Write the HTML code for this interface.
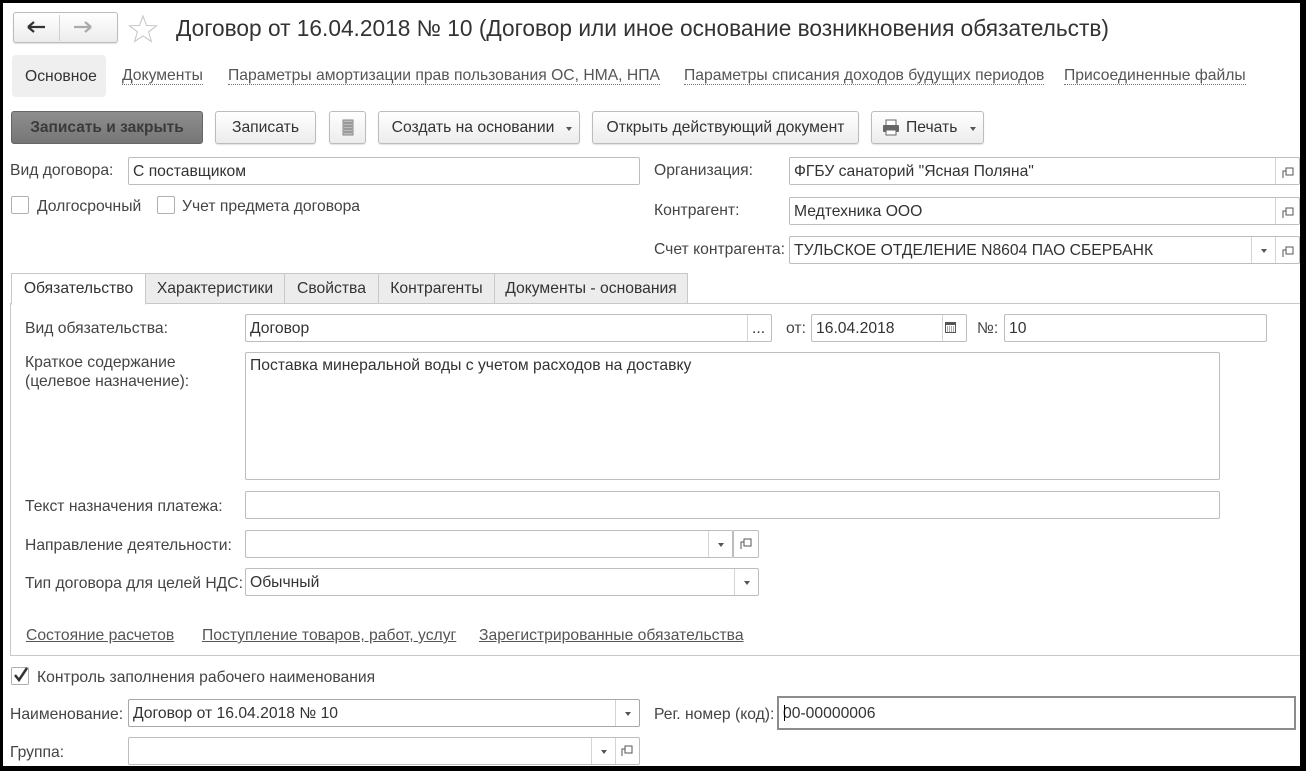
<!DOCTYPE html>
<html><head><meta charset="utf-8"><style>
*{box-sizing:border-box;margin:0;padding:0}
body{width:1306px;height:771px;background:#000;position:relative;overflow:hidden;font-family:"Liberation Sans",Arial,sans-serif;font-size:15.7px;color:#444}
#pg{position:absolute;left:3px;top:3px;width:1297px;height:763px;background:#fff}
.a{position:absolute;white-space:nowrap}
.t{position:absolute;white-space:nowrap;line-height:18px}
.inp{position:absolute;border:1px solid #bdbdbd;border-radius:2px;background:#fff;color:#333;padding-left:4px;white-space:nowrap}
.btn{position:absolute;border:1px solid #bcbcbc;border-radius:3px;background:linear-gradient(#fff,#ececec);color:#333;text-align:center;box-shadow:0 1px 1px rgba(0,0,0,.12)}
.dd,.dn{position:absolute;top:0;bottom:0;width:24px;border-left:1px solid #d4d4d4}
.dd:after{content:"";position:absolute;left:9px;top:50%;margin-top:-1px;border-left:3px solid transparent;border-right:3px solid transparent;border-top:4px solid #555}
.lk{position:absolute;white-space:nowrap;color:#555;border-bottom:1px dotted #777;line-height:17px}
.ul{position:absolute;white-space:nowrap;color:#555;text-decoration:underline;line-height:18px}
.cb{position:absolute;width:18px;height:18px;border:1px solid #b0b0b0;border-radius:2px;background:#fff}
.tab{position:absolute;top:270px;height:31px;border:1px solid #c8c8c8;background:#ececec;text-align:center;line-height:30px;color:#333}
svg{position:absolute}
</style></head><body><div id="pg">
<div class="btn" style="left:10px;top:9px;width:105px;height:31px"></div>
<div class="a" style="left:56px;top:12px;width:1px;height:26px;background:#d0d0d0"></div>
<svg style="left:24px;top:17px" width="20" height="14"><path d="M1 7H18M1 7L7 2M1 7L7 12" stroke="#333" stroke-width="2.2" fill="none"/></svg>
<svg style="left:70px;top:17px" width="20" height="14"><path d="M1 7H18M18 7L12 2M18 7L12 12" stroke="#aaa" stroke-width="2.2" fill="none"/></svg>
<svg style="left:124px;top:11px" width="32" height="30"><path d="M16 2L19.5 11.5 29.5 11.8 21.6 17.8 24.4 27.5 16 21.8 7.6 27.5 10.4 17.8 2.5 11.8 12.5 11.5Z" fill="none" stroke="#c4c4c4" stroke-width="1"/></svg>
<div class="t" style="left:173px;top:12px;font-size:22.7px;line-height:26px;color:#333">Договор от 16.04.2018 № 10 (Договор или иное основание возникновения обязательств)</div>
<div class="a" style="left:9px;top:52px;width:94px;height:42px;background:#efefef;border-radius:4px"></div>
<div class="t" style="left:22px;top:65px;color:#333">Основное</div>
<div class="lk" style="left:119px;top:64px">Документы</div>
<div class="lk" style="left:225px;top:64px">Параметры амортизации прав пользования ОС, НМА, НПА</div>
<div class="lk" style="left:681px;top:64px">Параметры списания доходов будущих периодов</div>
<div class="lk" style="left:1061px;top:64px">Присоединенные файлы</div>
<div class="a" style="left:8px;top:108px;width:192px;height:33px;border:1px solid #666;border-radius:3px;background:linear-gradient(#8e8e8e,#767676);color:#3a3a3a;font-weight:bold;text-align:center;line-height:32px;font-size:15.5px">Записать и закрыть</div>
<div class="btn" style="left:212px;top:108px;width:101px;height:33px;line-height:32px">Записать</div>
<div class="btn" style="left:326px;top:108px;width:37px;height:33px"></div>
<svg style="left:339px;top:116px" width="12" height="17"><rect x="1" y="1" width="10" height="15" fill="#bbb" stroke="#888"/><path d="M2 4H10M2 7H10M2 10H10M2 13H10" stroke="#777"/></svg>
<div class="btn" style="left:375px;top:108px;width:202px;height:33px;line-height:32px;padding-right:12px">Создать на основании</div>
<div class="a" style="left:563px;top:124px;border-left:3px solid transparent;border-right:3px solid transparent;border-top:4px solid #555"></div>
<div class="btn" style="left:589px;top:108px;width:267px;height:33px;line-height:32px">Открыть действующий документ</div>
<div class="btn" style="left:868px;top:108px;width:113px;height:33px;line-height:32px;text-align:left"><span style="margin-left:34px">Печать</span></div>
<svg style="left:879px;top:116px" width="18" height="17"><rect x="4" y="1" width="10" height="6" fill="#fff" stroke="#666"/><rect x="1" y="6" width="16" height="7" rx="1" fill="#666"/><rect x="4" y="11" width="10" height="5" fill="#fff" stroke="#666"/></svg>
<div class="a" style="left:967px;top:124px;border-left:3px solid transparent;border-right:3px solid transparent;border-top:4px solid #555"></div>
<div class="t" style="left:7px;top:159px">Вид договора:</div>
<div class="inp" style="left:125px;top:154px;width:512px;height:28px;line-height:27px">С поставщиком</div>
<div class="cb" style="left:8px;top:193px"></div><div class="t" style="left:34px;top:195px">Долгосрочный</div>
<div class="cb" style="left:154px;top:193px"></div><div class="t" style="left:179px;top:195px">Учет предмета договора</div>
<div class="t" style="left:651px;top:159px">Организация:</div>
<div class="inp" style="left:786px;top:154px;width:511px;height:28px;line-height:27px">ФГБУ санаторий "Ясная Поляна"<div class="dn" style="right:0"></div></div>
<div class="t" style="left:651px;top:199px">Контрагент:</div>
<div class="inp" style="left:786px;top:194px;width:511px;height:28px;line-height:27px">Медтехника ООО<div class="dn" style="right:0"></div></div>
<div class="t" style="left:651px;top:238px">Счет контрагента:</div>
<div class="inp" style="left:786px;top:233px;width:511px;height:28px;line-height:27px">ТУЛЬСКОЕ ОТДЕЛЕНИЕ N8604 ПАО СБЕРБАНК<div class="dd" style="right:24px"></div><div class="dn" style="right:0"></div></div>
<svg style="left:1279px;top:164px" width="12" height="12"><path d="M1 11V4H4M4 8V1H11V8H4Z" fill="none" stroke="#555"/></svg>
<svg style="left:1279px;top:204px" width="12" height="12"><path d="M1 11V4H4M4 8V1H11V8H4Z" fill="none" stroke="#555"/></svg>
<svg style="left:1279px;top:243px" width="12" height="12"><path d="M1 11V4H4M4 8V1H11V8H4Z" fill="none" stroke="#555"/></svg>
<div class="a" style="left:7px;top:300px;width:1290px;height:353px;border:1px solid #c8c8c8;border-right:none"></div>
<div class="tab" style="left:142px;width:140px">Характеристики</div>
<div class="tab" style="left:281px;width:95px">Свойства</div>
<div class="tab" style="left:375px;width:117px">Контрагенты</div>
<div class="tab" style="left:491px;width:194px">Документы - основания</div>
<div class="tab" style="left:8px;width:135px;background:#fff;border-bottom-color:#fff;height:32px">Обязательство</div>
<div class="t" style="left:22px;top:317px">Вид обязательства:</div>
<div class="inp" style="left:242px;top:311px;width:527px;height:28px;line-height:27px">Договор<div class="dn" style="right:0"></div></div>
<div class="a" style="left:749px;top:317px;color:#333">...</div>
<div class="t" style="left:783px;top:317px">от:</div>
<div class="inp" style="left:808px;top:311px;width:156px;height:28px;line-height:27px">16.04.2018<div class="dn" style="right:0"></div></div>
<svg style="left:942px;top:318px" width="11" height="12"><rect x="0.5" y="1.5" width="10" height="10" fill="none" stroke="#555"/><rect x="0" y="1" width="11" height="3" fill="#555"/><path d="M2 6H9M2 8H9M2 10H9" stroke="#555" stroke-dasharray="1 1"/></svg>
<div class="t" style="left:974px;top:317px">№:</div>
<div class="inp" style="left:1001px;top:311px;width:263px;height:28px;line-height:27px">10</div>
<div class="t" style="left:22px;top:350px;line-height:19px">Краткое содержание<br>(целевое назначение):</div>
<div class="inp" style="left:242px;top:349px;width:975px;height:128px;padding-top:4px;line-height:18px">Поставка минеральной воды с учетом расходов на доставку</div>
<div class="t" style="left:22px;top:495px">Текст назначения платежа:</div>
<div class="inp" style="left:242px;top:488px;width:975px;height:28px"></div>
<div class="t" style="left:22px;top:534px">Направление деятельности:</div>
<div class="inp" style="left:242px;top:527px;width:488px;height:28px"><div class="dd" style="right:0"></div></div>
<div class="inp" style="left:730px;top:527px;width:26px;height:28px;border-radius:0 2px 2px 0"></div>
<svg style="left:737px;top:535px" width="12" height="12"><path d="M1 11V4H4M4 8V1H11V8H4Z" fill="none" stroke="#555"/></svg>
<div class="t" style="left:22px;top:572px">Тип договора для целей НДС:</div>
<div class="inp" style="left:242px;top:565px;width:514px;height:28px;line-height:27px">Обычный<div class="dd" style="right:0"></div></div>
<div class="ul" style="left:23px;top:624px">Состояние расчетов</div>
<div class="ul" style="left:199px;top:624px">Поступление товаров, работ, услуг</div>
<div class="ul" style="left:476px;top:624px">Зарегистрированные обязательства</div>
<div class="cb" style="left:8px;top:664px"></div>
<svg style="left:9px;top:663px" width="18" height="18"><path d="M3 9L7 14L15 2" fill="none" stroke="#333" stroke-width="2.5"/></svg>
<div class="t" style="left:34px;top:666px">Контроль заполнения рабочего наименования</div>
<div class="t" style="left:7px;top:703px">Наименование:</div>
<div class="inp" style="left:125px;top:696px;width:512px;height:28px;line-height:27px;border-color:#a8a8a8">Договор от 16.04.2018 № 10<div class="dd" style="right:0"></div></div>
<div class="t" style="left:651px;top:703px">Рег. номер (код):</div>
<div class="inp" style="left:774px;top:693px;width:519px;height:34px;line-height:31px;border:2px solid #8c8c8c;border-radius:0">00-00000006</div>
<div class="a" style="left:781px;top:702px;width:1px;height:16px;background:#000"></div>
<div class="t" style="left:7px;top:741px">Группа:</div>
<div class="inp" style="left:125px;top:734px;width:512px;height:28px"><div class="dd" style="right:24px"></div><div class="dn" style="right:0"></div></div>
<svg style="left:618px;top:742px" width="12" height="12"><path d="M1 11V4H4M4 8V1H11V8H4Z" fill="none" stroke="#555"/></svg>
</div>
</body></html>
